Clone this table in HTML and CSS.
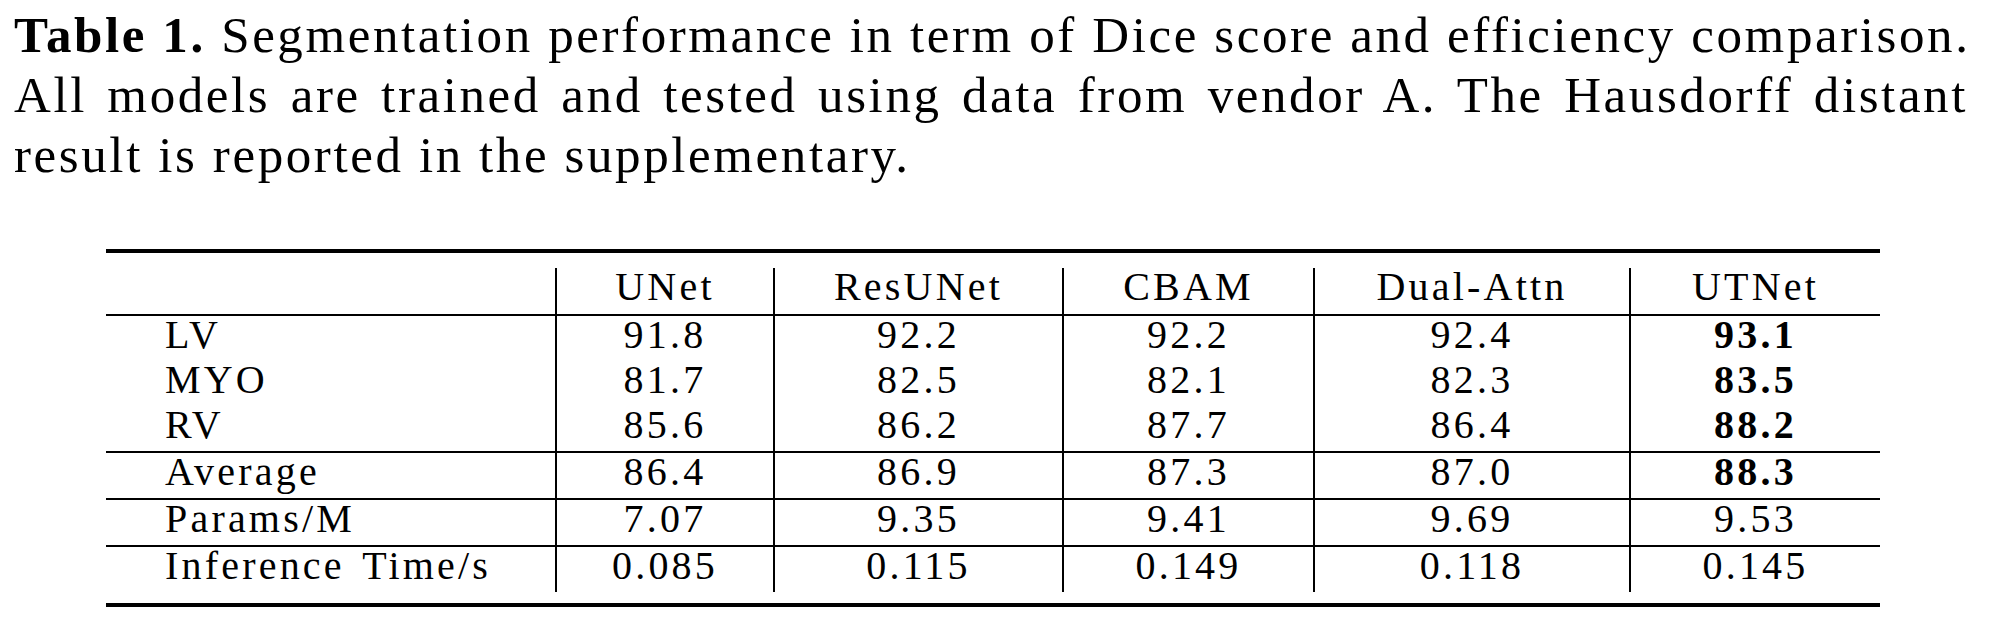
FILE: index.html
```html
<!DOCTYPE html>
<html lang="en">
<head>
<meta charset="utf-8">
<title>Table 1</title>
<link rel="stylesheet" href="styles.css">
</head>
<body>
<div class="page">
  <p class="caption">
    <span class="line just"><b class="label">Table 1.</b> Segmentation performance in term of Dice score and efficiency comparison.</span>
    <span class="line just">All models are trained and tested using data from vendor A. The Hausdorff distant</span>
    <span class="line">result is reported in the supplementary.</span>
  </p>
  <div class="table-wrap">
    <table class="results">
      <colgroup>
        <col class="c-label">
        <col class="c-unet">
        <col class="c-resunet">
        <col class="c-cbam">
        <col class="c-dual">
        <col class="c-utnet">
      </colgroup>
      <thead>
        <tr><th></th><th>UNet</th><th>ResUNet</th><th>CBAM</th><th>Dual-Attn</th><th>UTNet</th></tr>
      </thead>
      <tbody class="group">
        <tr><td>LV</td><td>91.8</td><td>92.2</td><td>92.2</td><td>92.4</td><td class="best">93.1</td></tr>
        <tr><td>MYO</td><td>81.7</td><td>82.5</td><td>82.1</td><td>82.3</td><td class="best">83.5</td></tr>
        <tr><td>RV</td><td>85.6</td><td>86.2</td><td>87.7</td><td>86.4</td><td class="best">88.2</td></tr>
      </tbody>
      <tbody class="group">
        <tr><td>Average</td><td>86.4</td><td>86.9</td><td>87.3</td><td>87.0</td><td class="best">88.3</td></tr>
      </tbody>
      <tbody class="group">
        <tr><td>Params/M</td><td>7.07</td><td>9.35</td><td>9.41</td><td>9.69</td><td>9.53</td></tr>
      </tbody>
      <tbody class="group">
        <tr><td>Inference Time/s</td><td>0.085</td><td>0.115</td><td>0.149</td><td>0.118</td><td>0.145</td></tr>
      </tbody>
    </table>
  </div>
</div>
</body>
</html>
```

FILE: styles.css
```css
html, body {
  margin: 0;
  padding: 0;
  background: #ffffff;
}

body {
  width: 2000px;
  height: 617px;
  overflow: hidden;
  color: #000000;
  font-family: "Liberation Serif", "Times New Roman", serif;
}

.page {
  padding-top: 5px;
}

.caption {
  margin: 0 0 0 14px;
  width: 1954px;
  font-size: 51px;
  line-height: 60px;
  letter-spacing: 2.6px;
}

.caption .line {
  display: block;
  text-align: left;
  white-space: nowrap;
}

.caption .just {
  text-align: justify;
  text-align-last: justify;
}

.caption .label {
  font-weight: bold;
}

.table-wrap {
  margin: 64px 0 0 106px;
  width: 1774px;
  border-top: 4px solid #000000;
  border-bottom: 4px solid #000000;
  padding: 15px 0 11px;
}

.results {
  width: 1774px;
  table-layout: fixed;
  border-collapse: separate;
  border-spacing: 0;
  font-size: 40px;
  letter-spacing: 3.2px;
  word-spacing: 5px;
}

.c-label { width: 449px; }
.c-unet { width: 218px; }
.c-resunet { width: 289px; }
.c-cbam { width: 251px; }
.c-dual { width: 316px; }
.c-utnet { width: 251px; }

.results th,
.results td {
  padding: 0 0 8px;
  line-height: 37px;
  vertical-align: top;
  text-align: center;
  font-weight: normal;
  white-space: nowrap;
}

.results th {
  padding-bottom: 9px;
}

.results th:first-child,
.results td:first-child {
  text-align: left;
  padding-left: 59px;
}

.results th + th,
.results td + td {
  border-left: 2px solid #000000;
}

.results .group tr:first-child td {
  border-top: 2px solid #000000;
}

.results .best {
  font-weight: bold;
}
```
